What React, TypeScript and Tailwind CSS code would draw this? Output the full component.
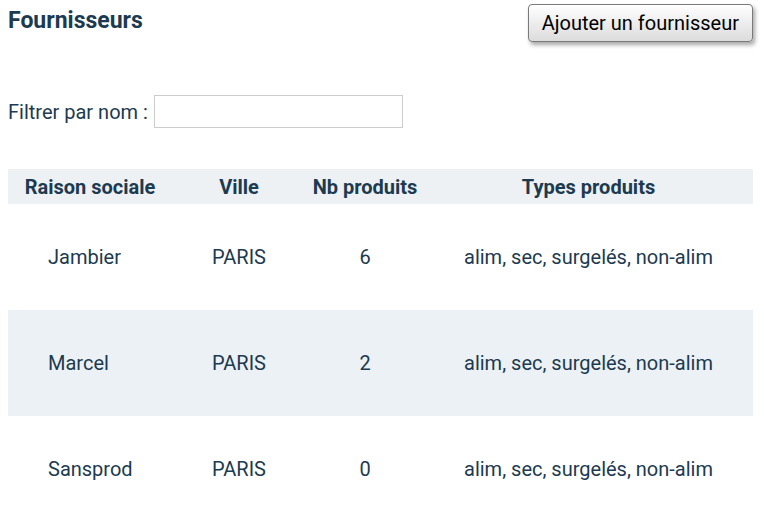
import React from 'react';

const rows = [
  { name: 'Jambier', ville: 'PARIS', nb: 6, types: 'alim, sec, surgelés, non-alim' },
  { name: 'Marcel', ville: 'PARIS', nb: 2, types: 'alim, sec, surgelés, non-alim' },
  { name: 'Sansprod', ville: 'PARIS', nb: 0, types: 'alim, sec, surgelés, non-alim' },
];

export default function App() {
  return (
    <div className="min-h-screen bg-white p-2 text-[#1c3a50] font-['Roboto',sans-serif]">
      <div className="flex items-start justify-between">
        <h1 className="text-[23px] font-bold leading-6 mt-[1px]">Fournisseurs</h1>
        <button className="mr-[3px] mt-[-4px] h-[38px] rounded-[4px] border border-[#7a7a7a] bg-gradient-to-b from-white to-[#dcdcdc] px-[13px] text-[20px] text-black shadow-[2px_3px_4px_rgba(0,0,0,0.35)]">
          Ajouter un fournisseur
        </button>
      </div>

      <div className="mt-[53px] flex items-center gap-[6px] text-[20px]">
        <label>Filtrer par nom :</label>
        <input type="text" className="h-[33px] w-[249px] border border-[#cccccc] bg-white outline-none" />
      </div>

      <table className="mt-[41px] w-[745px] border-collapse text-[20px]">
        <thead>
          <tr className="h-[35px] bg-[#edf1f4]">
            <th className="w-[164px] text-center font-bold">Raison sociale</th>
            <th className="w-[134px] text-center font-bold">Ville</th>
            <th className="w-[118px] text-center font-bold">Nb produits</th>
            <th className="text-center font-bold">Types produits</th>
          </tr>
        </thead>
        <tbody>
          {rows.map((r, i) => (
            <tr key={r.name} className={i % 2 === 1 ? 'h-[106px] bg-[#ecf1f5]' : 'h-[106px] bg-white'}>
              <td className="pl-[40px] text-left">{r.name}</td>
              <td className="text-center">{r.ville}</td>
              <td className="text-center">{r.nb}</td>
              <td className="text-center">{r.types}</td>
            </tr>
          ))}
        </tbody>
      </table>
    </div>
  );
}
